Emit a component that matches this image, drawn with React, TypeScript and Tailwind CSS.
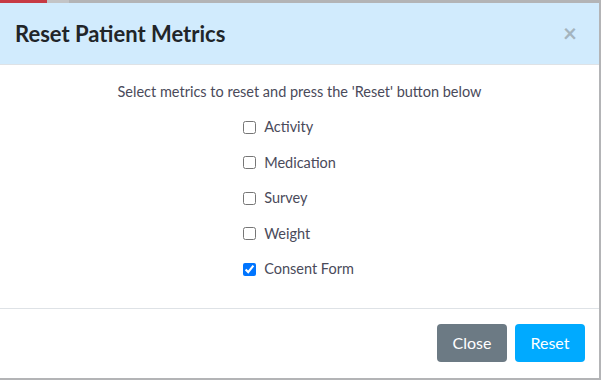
import { useState } from 'react'

const METRICS = ['Activity', 'Medication', 'Survey', 'Weight', 'Consent Form']

export default function App() {
  const [checked, setChecked] = useState<Record<string, boolean>>({ 'Consent Form': true })

  return (
    <div
      className="w-[601px] h-[380px] overflow-hidden bg-[#b3b4b6] flex flex-col"
      style={{ fontFamily: 'Lato, "Open Sans", sans-serif' }}
    >
      {/* page behind the modal, only a sliver shows */}
      <div className="h-[3px] flex shrink-0">
        <div className="w-[47px] bg-[#c73a44]" />
        <div className="w-[22px] bg-[#c3c4c6]" />
        <div className="flex-1 bg-[#b3b4b6]" />
      </div>

      <div className="w-[599px] h-[375px] bg-white flex flex-col shrink-0">
        {/* Header */}
        <div className="h-[62px] bg-[#d1ebfd] border-b border-[#dee2e6] flex items-center justify-between pl-[15px] pr-[22px]">
          <h5 className="text-[22px] font-bold text-[#212529] leading-[1.5]">Reset Patient Metrics</h5>
          <button className="text-[24px] font-bold leading-none text-[#a4b4be] -mt-[1px]">×</button>
        </div>

        {/* Body */}
        <div className="pt-4 pb-[28px] px-4 text-center text-[14.5px] text-[#4a4a5a] leading-[22px]">
          <p className="mb-[13px]">Select metrics to reset and press the 'Reset' button below</p>
          <div className="w-fit mx-auto pr-[2px] flex flex-col items-start gap-[13.5px]">
            {METRICS.map((m) => (
              <label key={m} className="flex items-center h-[22px] cursor-pointer">
                <input
                  type="checkbox"
                  className="w-[13px] h-[13px] m-0 mr-[8px]"
                  checked={!!checked[m]}
                  onChange={() => setChecked((c) => ({ ...c, [m]: !c[m] }))}
                />
                <span>{m}</span>
              </label>
            ))}
          </div>
        </div>

        {/* Footer */}
        <div className="border-t border-[#dee2e6] pt-[15px] pr-[14px] flex justify-end gap-2">
          <button className="h-[38px] w-[70px] rounded bg-[#6c7a84] text-white text-base">Close</button>
          <button className="h-[38px] w-[70px] rounded bg-[#00aaff] text-white text-base">Reset</button>
        </div>
      </div>
    </div>
  )
}
